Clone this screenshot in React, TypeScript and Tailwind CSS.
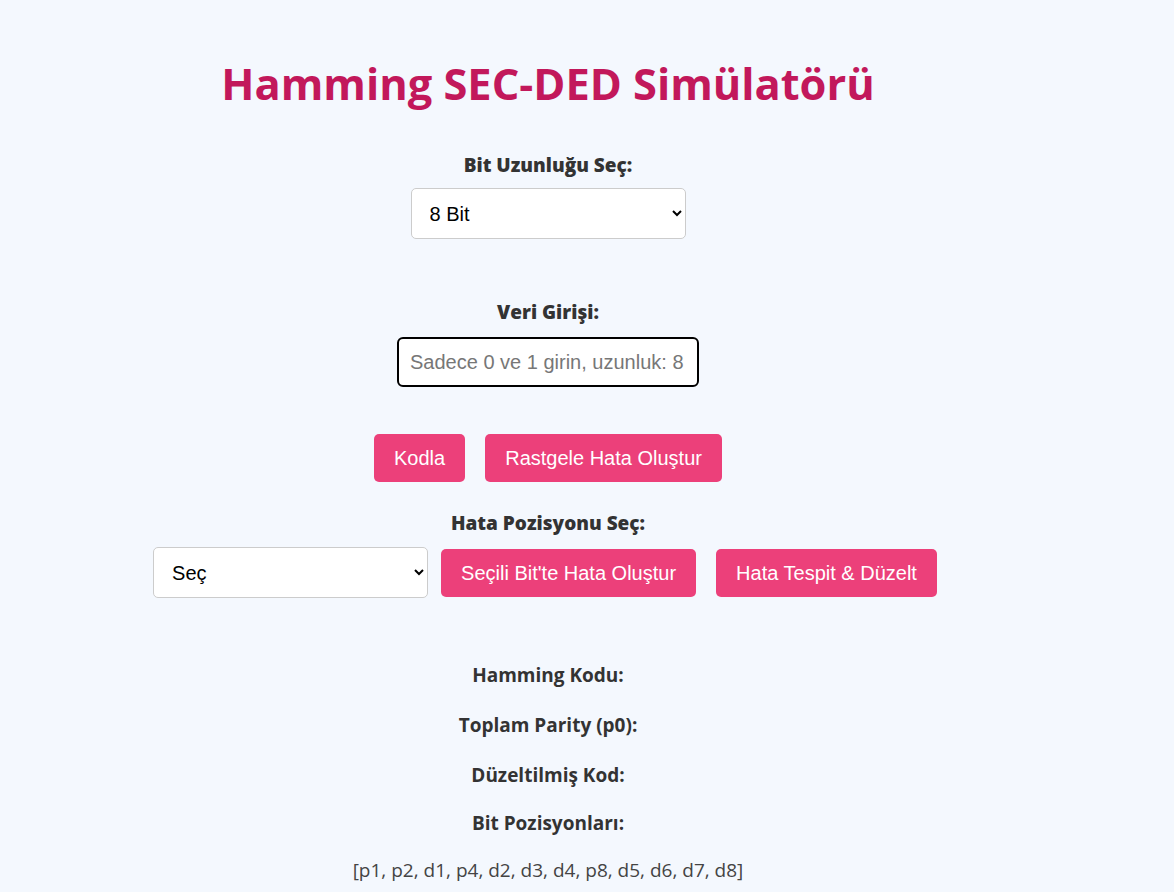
import React from "react";

const sans = { fontFamily: '"Open Sans", "Noto Sans", sans-serif' };

export default function App() {
  return (
    <div className="min-h-[892px] w-full bg-[#f4f8fe] text-[#333]" style={sans}>
      <div className="flex flex-col items-center pr-[78px] pt-[52px]">
        <h1 className="m-0 text-[43.4px] font-bold leading-[64px] text-[#c2185b]">Hamming SEC-DED Simülatörü</h1>

        <label className="mt-[37px] text-[19px] font-extrabold leading-[24px]">Bit Uzunluğu Seç:</label>
        <select
          defaultValue="8"
          className="mt-[11px] h-[51px] w-[275px] rounded-[5px] border border-[#ccc] bg-white pl-[14px] pr-[6px] text-[20px] text-black"
          style={{ fontFamily: '"Liberation Sans", Arial, sans-serif' }}
        >
          <option value="8">8 Bit</option>
          <option value="16">16 Bit</option>
          <option value="32">32 Bit</option>
        </select>

        <label className="mt-[61px] text-[19px] font-extrabold leading-[24px]">Veri Girişi:</label>
        <input
          placeholder="Sadece 0 ve 1 girin, uzunluk: 8"
          className="mt-[13px] h-[50px] w-[302px] rounded-[6px] border-2 border-black bg-white px-[11px] text-[20px] text-black placeholder:text-[#777] outline-none"
          style={{ fontFamily: '"Liberation Sans", Arial, sans-serif' }}
        />

        <div className="mt-[47px] flex gap-[20px]" style={{ fontFamily: '"Liberation Sans", Arial, sans-serif' }}>
          <button className="h-[48px] rounded-[5px] bg-[#ec407a] px-[20px] text-[20px] text-white">Kodla</button>
          <button className="h-[48px] rounded-[5px] bg-[#ec407a] px-[20px] text-[20px] text-white">Rastgele Hata Oluştur</button>
        </div>

        <label className="mt-[29px] text-[19px] font-extrabold leading-[24px]">Hata Pozisyonu Seç:</label>
        <div className="mt-[12px] mr-[6px] flex items-center" style={{ fontFamily: '"Liberation Sans", Arial, sans-serif' }}>
          <select
            defaultValue=""
            className="h-[51px] w-[275px] rounded-[5px] border border-[#ccc] bg-white pl-[14px] pr-[6px] text-[20px] text-black"
          >
            <option value="">Seç</option>
          </select>
          <button className="ml-[13px] h-[48px] rounded-[5px] bg-[#ec407a] px-[20px] text-[20px] text-white">Seçili Bit'te Hata Oluştur</button>
          <button className="ml-[20px] h-[48px] rounded-[5px] bg-[#ec407a] px-[20px] text-[20px] text-white">Hata Tespit &amp; Düzelt</button>
        </div>

        <div className="mt-[65px] flex flex-col items-center">
          <div className="text-[19px] font-bold leading-[24px]">Hamming Kodu:</div>
          <div className="mt-[26px] text-[19px] font-bold leading-[24px]">Toplam Parity (p0):</div>
          <div className="mt-[26px] text-[19px] font-bold leading-[24px]">Düzeltilmiş Kod:</div>
          <div className="mt-[24px] text-[19px] font-bold leading-[24px]">Bit Pozisyonları:</div>
          <div className="mt-[23px] text-[19px] leading-[24px] text-[#444]">[p1, p2, d1, p4, d2, d3, d4, p8, d5, d6, d7, d8]</div>
        </div>
      </div>
    </div>
  );
}
